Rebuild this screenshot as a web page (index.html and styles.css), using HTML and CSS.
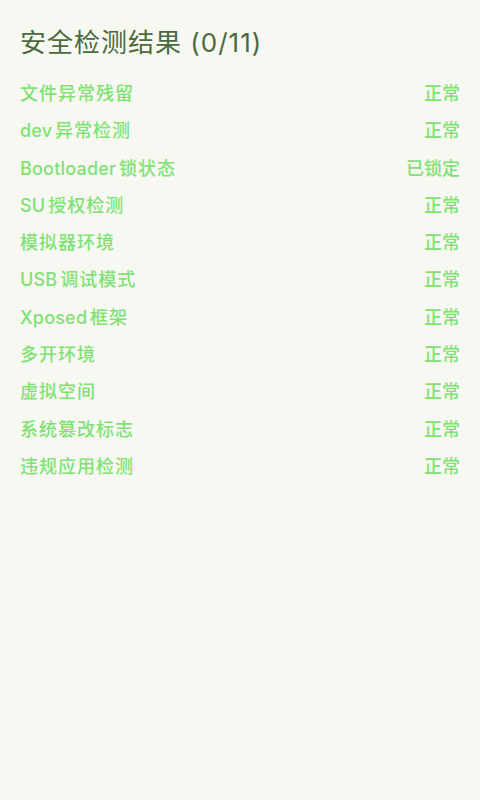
FILE: index.html
```html
<!DOCTYPE html>
<html lang="zh-CN">
<head>
    <meta charset="UTF-8">
    <meta name="viewport" content="width=device-width, initial-scale=1.0">
    <title>安全检测结果</title>
    <link rel="stylesheet" href="styles.css">
</head>
<body>
    <div class="page">
        <h1 class="title">安全检测结果 (0/11)</h1>
        <ul class="list">
            <li><span>文件异常残留</span><span>正常</span></li>
            <li><span><i class="en">dev</i> 异常检测</span><span>正常</span></li>
            <li><span><i class="en">Bootloader</i> 锁状态</span><span>已锁定</span></li>
            <li><span><i class="en">SU</i> 授权检测</span><span>正常</span></li>
            <li><span>模拟器环境</span><span>正常</span></li>
            <li><span><i class="en">USB</i> 调试模式</span><span>正常</span></li>
            <li><span><i class="en">Xposed</i> 框架</span><span>正常</span></li>
            <li><span>多开环境</span><span>正常</span></li>
            <li><span>虚拟空间</span><span>正常</span></li>
            <li><span>系统篡改标志</span><span>正常</span></li>
            <li><span>违规应用检测</span><span>正常</span></li>
        </ul>
    </div>
</body>
</html>
```

FILE: styles.css
```css
*{
    margin: 0;
    padding: 0;
}
html, body{
    height: 100%;
    background-color: #f7f8f1;
}
body{
    font-family: Inter, "Noto Sans CJK SC", sans-serif;
}
.page{
    padding: 25px 20px;
}
.title{
    font-size: 26px;
    font-weight: 400;
    letter-spacing: 1px;
    color: #4b6a3e;
    line-height: 36px;
    margin-bottom: 14px;
}
.list{
    list-style: none;
}
.list li{
    display: flex;
    justify-content: space-between;
    font-size: 18px;
    font-weight: 500;
    letter-spacing: 1px;
    word-spacing: -3px;
    line-height: 37.3px;
    color: #80e274;
}
.list li .en{
    font-style: normal;
    letter-spacing: 0.2px;
}
.list li span:last-child{
    letter-spacing: 0;
}
```
